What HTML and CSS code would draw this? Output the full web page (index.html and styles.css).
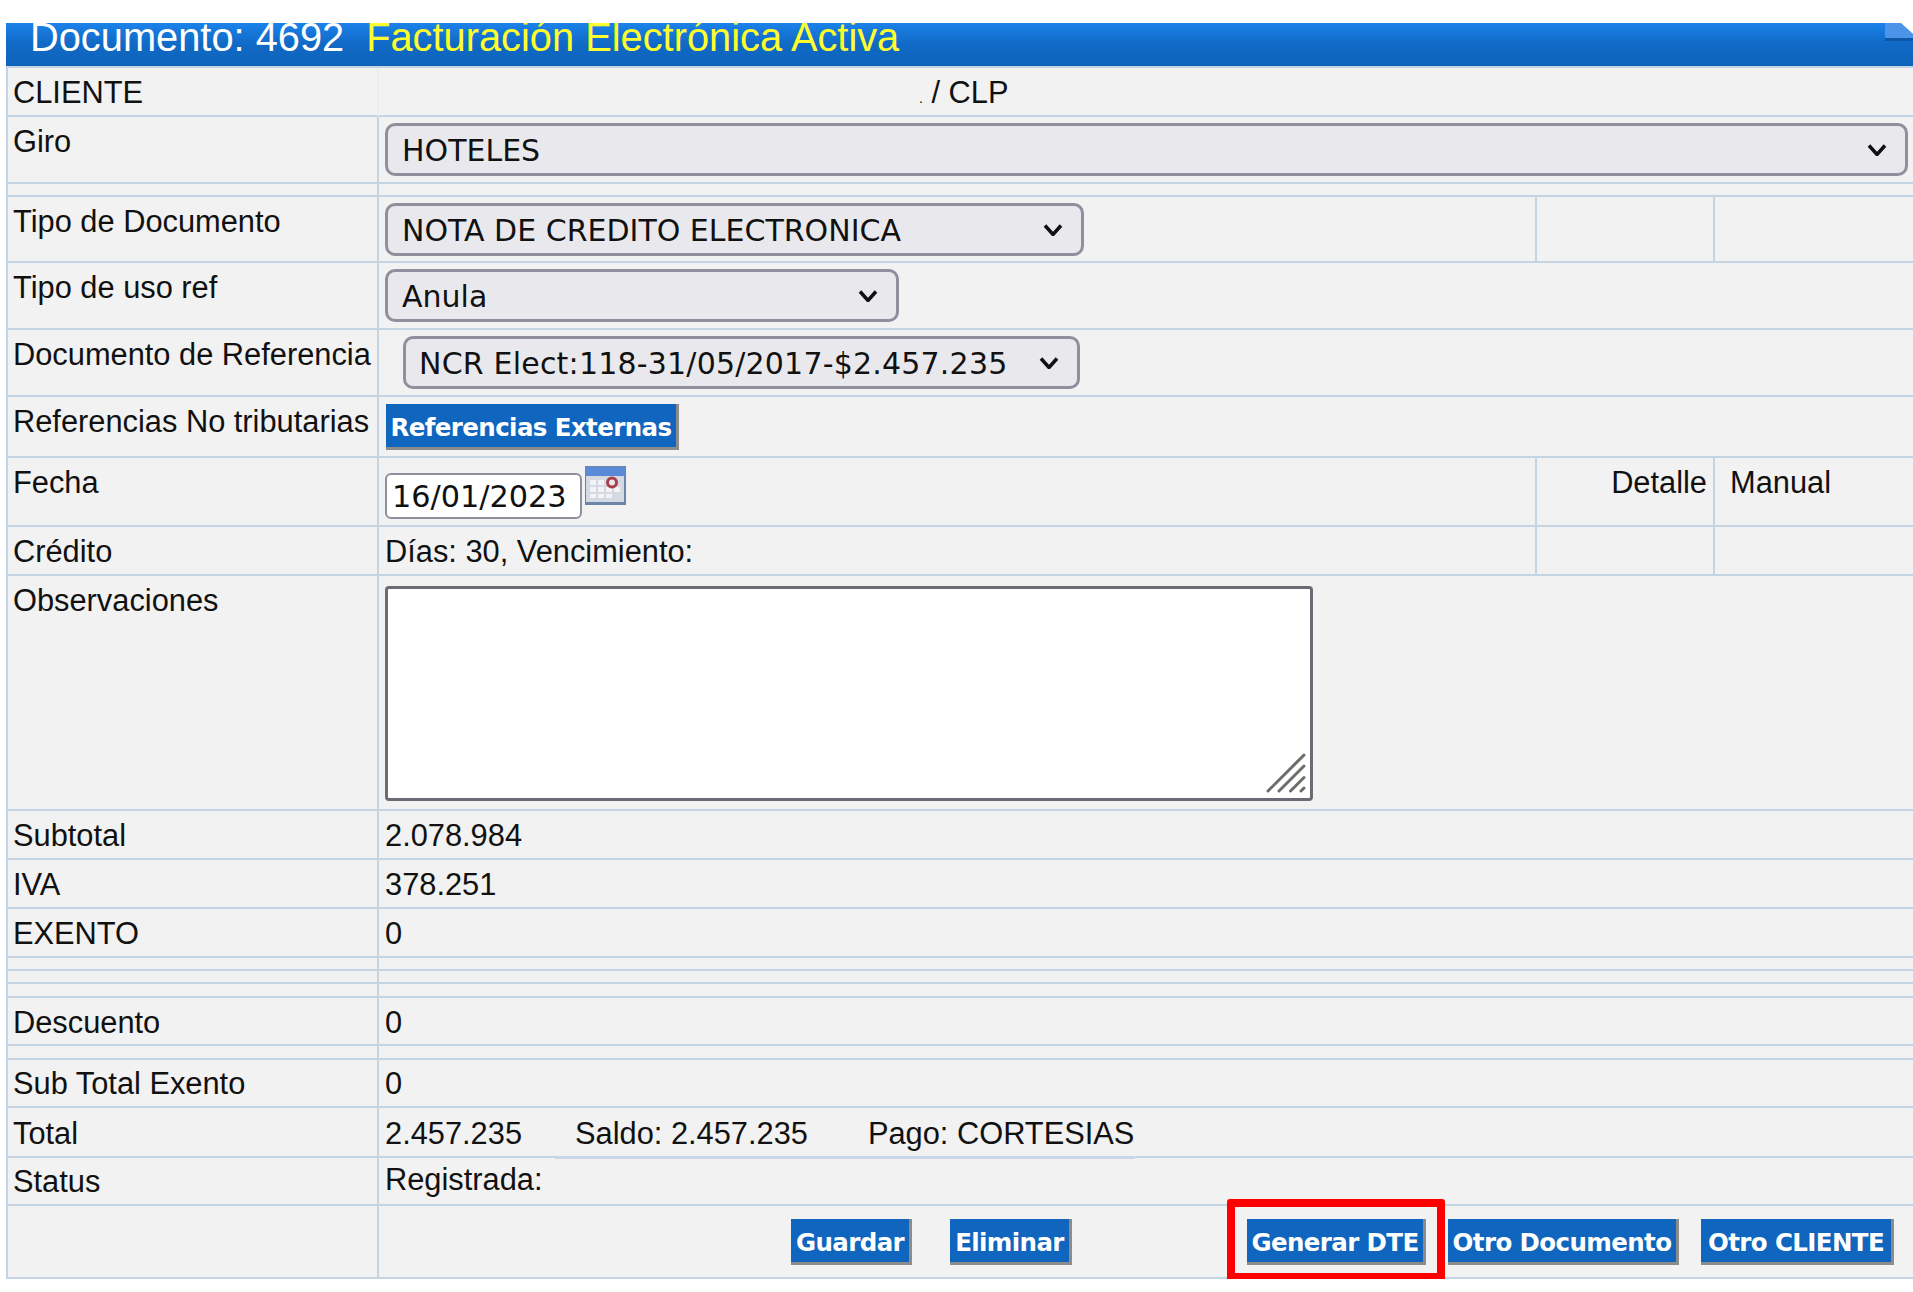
FILE: index.html
```html
<!DOCTYPE html>
<html lang="es">
<head>
<meta charset="utf-8">
<title>Documento 4692</title>
<link rel="stylesheet" href="styles.css">
</head>
<body>
<main class="page">
  <header class="title-bar">
    <span>Documento: 4692</span><span class="title-active">Facturación Electrónica Activa</span>
    <svg class="corner-fold" width="28" height="18" viewBox="0 0 28 18"><rect x="0" y="15" width="28" height="3" fill="#0e56a6"/><path d="M0 0H16L28 11V15H0Z" fill="#4a94ea"/><path d="M16 0H28V11Z" fill="#fff"/></svg>
  </header>
  <table class="doc-table">
    <colgroup><col class="col-label"><col class="col-main"><col class="col-mid"><col class="col-end"></colgroup>
    <tbody>
      <tr class="h49"><td class="client-label">CLIENTE</td><td colspan="3" class="client-cell"><small class="dot">.</small> / CLP</td></tr>
      <tr class="h67"><td>Giro</td><td colspan="3" class="ctl ctl-6">
        <span class="select-wrap w-giro"><select class="sel"><option>HOTELES</option></select><svg class="chev" width="20" height="12" viewBox="0 0 20 12"><path d="M2 1.5 10 10.5 18 1.5"/></svg></span></td></tr>
      <tr class="h13"><td></td><td colspan="3"></td></tr>
      <tr class="h66"><td>Tipo de Documento</td><td class="ctl ctl-6">
        <span class="select-wrap w-tipo"><select class="sel"><option>NOTA DE CREDITO ELECTRONICA</option></select><svg class="chev" width="20" height="12" viewBox="0 0 20 12"><path d="M2 1.5 10 10.5 18 1.5"/></svg></span></td><td></td><td></td></tr>
      <tr class="h67"><td>Tipo de uso ref</td><td colspan="3" class="ctl ctl-6">
        <span class="select-wrap w-uso"><select class="sel"><option>Anula</option></select><svg class="chev" width="20" height="12" viewBox="0 0 20 12"><path d="M2 1.5 10 10.5 18 1.5"/></svg></span></td></tr>
      <tr class="h67"><td>Documento de Referencia</td><td colspan="3" class="ctl ctl-6 ctl-indent">
        <span class="select-wrap w-ref"><select class="sel sel-spaced"><option>NCR Elect:118-31/05/2017-$2.457.235</option></select><svg class="chev" width="20" height="12" viewBox="0 0 20 12"><path d="M2 1.5 10 10.5 18 1.5"/></svg></span></td></tr>
      <tr class="h61"><td>Referencias No tributarias</td><td colspan="3" class="ctl ctl-7 ctl-btn"><button class="btn w-ext" type="button">Referencias Externas</button></td></tr>
      <tr class="h69"><td>Fecha</td><td class="ctl ctl-8">
        <div class="date-row"><input class="date" type="text" value="16/01/2023">
          <svg class="cal" width="41" height="39" viewBox="0 0 41 39">
            <rect width="41" height="39" fill="#6d86a8"/>
            <rect x="1" y="1" width="39" height="9" fill="#5a8ad8"/>
            <rect x="1" y="10" width="38" height="26" fill="#d5d9e2"/>
            <g fill="#f1f3f7"><rect x="5" y="14" width="6" height="5"/><rect x="13" y="14" width="6" height="5"/><rect x="21" y="14" width="6" height="5"/><rect x="5" y="21" width="6" height="5"/><rect x="13" y="21" width="6" height="5"/><rect x="21" y="21" width="6" height="5"/><rect x="29" y="21" width="6" height="5"/><rect x="5" y="28" width="6" height="4"/><rect x="13" y="28" width="6" height="4"/><rect x="21" y="28" width="6" height="4"/></g>
            <circle cx="27" cy="16.500" r="4.500" fill="#e8e8ee" stroke="#a8404a" stroke-width="3"/>
          </svg></div></td><td class="right">Detalle</td><td class="manual">Manual</td></tr>
      <tr class="h49"><td>Crédito</td><td class="val">Días: 30, Vencimiento:</td><td></td><td></td></tr>
      <tr class="h235"><td>Observaciones</td><td colspan="3" class="ctl ctl-10">
        <div class="area-wrap"><textarea class="area"></textarea>
          <svg class="grip" width="40" height="40" viewBox="0 0 40 40"><path d="M2 38 38 2M13 38 38 13M24.500 38 38 24.500M35 38 38 35"/></svg></div></td></tr>
      <tr class="h49"><td>Subtotal</td><td colspan="3" class="val">2.078.984</td></tr>
      <tr class="h49"><td>IVA</td><td colspan="3" class="val">378.251</td></tr>
      <tr class="h49"><td>EXENTO</td><td colspan="3" class="val">0</td></tr>
      <tr class="h13"><td></td><td colspan="3"></td></tr>
      <tr class="h13"><td></td><td colspan="3"></td></tr>
      <tr class="h14"><td></td><td colspan="3"></td></tr>
      <tr class="h48"><td>Descuento</td><td colspan="3" class="val">0</td></tr>
      <tr class="h14"><td></td><td colspan="3"></td></tr>
      <tr class="h48 tight"><td>Sub Total Exento</td><td colspan="3" class="val">0</td></tr>
      <tr class="h50 roomy"><td>Total</td><td colspan="3" class="val val-patched"><span class="total">2.457.235</span><span class="saldo">Saldo: 2.457.235</span><span>Pago: CORTESIAS</span><span class="line-patch"></span></td></tr>
      <tr class="h48 tight"><td>Status</td><td colspan="3" class="val val-status">Registrada:</td></tr>
      <tr class="h73"><td></td><td colspan="3" class="ctl-actions">
        <div class="actions">
          <button class="btn w-guardar" type="button">Guardar</button>
          <button class="btn w-eliminar" type="button">Eliminar</button>
          <span class="marked"><button class="btn w-generar" type="button">Generar DTE</button><span class="mark"></span></span>
          <button class="btn w-otrodoc" type="button">Otro Documento</button>
          <button class="btn w-otrocli" type="button">Otro CLIENTE</button>
        </div></td></tr>
    </tbody>
  </table>
</main>
</body>
</html>
```
FILE: styles.css
```css
html, body { margin: 0; padding: 0; background: #fff; }
html { overflow: hidden; }
body { font-family: "Liberation Sans", Arial, sans-serif; color: #111; }
.page { padding: 23px 0 0 6px; width: 1907px; }

.title-bar {
  position: relative;
  height: 43px;
  overflow: hidden;
  background: linear-gradient(#1b82ea 0, #1069c4 50%, #0f64bc 100%);
  color: #fff;
  font-size: 39.800px;
  line-height: 28px;
  padding-left: 24px;
  white-space: nowrap;
}
.title-active { color: #ffff2e; margin-left: 22px; }
.corner-fold { position: absolute; right: 0; top: 0; }

.doc-table {
  table-layout: fixed;
  width: 1907px;
  border-collapse: separate;
  border-spacing: 0;
  border-top: 2px solid #c5d4e3;
  border-left: 2px solid #c5d4e3;
  font-size: 30.800px;
  line-height: 36px;
}
.col-label { width: 371px; }
.col-main { width: 1158px; }
.col-mid { width: 178px; }
.col-end { width: 198px; }
.doc-table td {
  box-sizing: border-box;
  background: #f2f2f2;
  border-bottom: 2px solid #c5d4e3;
  border-right: 2px solid #c5d4e3;
  padding: 7px 0 0 6px;
  vertical-align: top;
  white-space: nowrap;
  overflow: hidden;
}
.doc-table td:first-child { padding-left: 5px; }
.doc-table td:last-child { border-right: 0; }
.doc-table td.client-label { border-right-color: #e8edf3; }
.h13 td { height: 13px; padding: 0; }
.h14 td { height: 14px; padding: 0; }
.h48 td { height: 48px; }
.h49 td { height: 49px; }
.h50 td { height: 50px; }
.h61 td { height: 61px; }
.h66 td { height: 66px; }
.h67 td { height: 67px; }
.h69 td { height: 69px; }
.h73 td { height: 73px; }
.h235 td { height: 235px; }
.doc-table .tight td { padding-top: 6px; }
.doc-table .roomy td { padding-top: 8px; }

.doc-table td.client-cell { padding-left: 540px; }
.dot { font-size: 14px; line-height: 0; }
.doc-table td.right { text-align: right; padding-right: 6px; }
.doc-table td.manual { padding-left: 15px; }
.doc-table td.ctl { line-height: 0; }
.doc-table td.ctl-6 { padding-top: 6px; }
.doc-table td.ctl-7 { padding-top: 7px; }
.doc-table td.ctl-8 { padding-top: 8px; }
.doc-table td.ctl-10 { padding-top: 10px; }
.doc-table td.ctl-indent { padding-left: 24px; }
.doc-table td.ctl-btn { padding-left: 7px; }
.doc-table .tight td.val-status { padding-top: 4px; }

.select-wrap { position: relative; display: inline-block; height: 53px; }
.w-giro { width: 1523px; }
.w-tipo { width: 699px; }
.w-uso { width: 514px; }
.w-ref { width: 677px; }
.sel {
  appearance: none;
  -webkit-appearance: none;
  box-sizing: border-box;
  display: block;
  width: 100%;
  height: 100%;
  margin: 0;
  padding: 2px 40px 0 14px;
  background: #e9e9ed;
  border: 3px solid #8f8f9d;
  border-radius: 10px;
  color: #111;
  font-family: "DejaVu Sans", Verdana, sans-serif;
  font-size: 30px;
}
.sel-spaced { letter-spacing: 0.2px; padding-left: 13px; }
.chev { position: absolute; right: 21px; top: 21px; pointer-events: none; }
.chev path { fill: none; stroke: #111; stroke-width: 3.500; }

.btn {
  box-sizing: border-box;
  height: 46px;
  padding: 4px 0 0;
  background: #1065be;
  border: 0;
  border-right: 3px solid #8c8c8c;
  border-bottom: 3px solid #8c8c8c;
  color: #fff;
  font-family: "DejaVu Sans", Verdana, sans-serif;
  font-weight: 700;
  font-size: 24.500px;
  letter-spacing: -0.6px;
  white-space: nowrap;
}
.w-ext { width: 293px; }

.date-row { display: flex; align-items: flex-start; }
.date {
  box-sizing: border-box;
  width: 197px;
  height: 46px;
  margin-top: 7px;
  padding: 0 0 0 5px;
  background: #fff;
  border: 2px solid #8f8f9d;
  border-radius: 6px;
  color: #111;
  font-family: "DejaVu Sans", Verdana, sans-serif;
  font-size: 30.300px;
}
.cal { margin-left: 3px; }

.area-wrap { position: relative; width: 928px; height: 215px; }
.area {
  box-sizing: border-box;
  display: block;
  width: 100%;
  height: 100%;
  margin: 0;
  background: #fff;
  border: 3px solid #6b6b76;
  border-radius: 4px;
  resize: none;
}
.grip { position: absolute; right: 7px; bottom: 8px; pointer-events: none; }
.grip path { fill: none; stroke: #6d6d6d; stroke-width: 3; stroke-linecap: round; }

.total { margin-right: 53px; }
.saldo { margin-right: 60px; }
.doc-table td.val-patched { position: relative; overflow: visible; }
.line-patch {
  position: absolute;
  left: 176px;
  bottom: -3px;
  width: 580px;
  height: 3px;
  background: #cad6e5;
}

.doc-table td.ctl-actions { padding: 13px 19px 0 0; overflow: visible; }
.actions { display: flex; justify-content: flex-end; line-height: 0; }
.w-guardar { width: 121px; margin-right: 38px; }
.w-eliminar { width: 122px; margin-right: 175px; }
.w-generar { width: 179px; display: block; }
.w-otrodoc { width: 231px; margin-left: 22px; }
.w-otrocli { width: 193px; margin-left: 22px; }
.marked { position: relative; display: block; }
.mark {
  position: absolute;
  left: -20px;
  top: -20px;
  width: 218px;
  height: 82px;
  box-sizing: border-box;
  border: 8px solid #f00;
  border-radius: 3px;
  pointer-events: none;
}
```
